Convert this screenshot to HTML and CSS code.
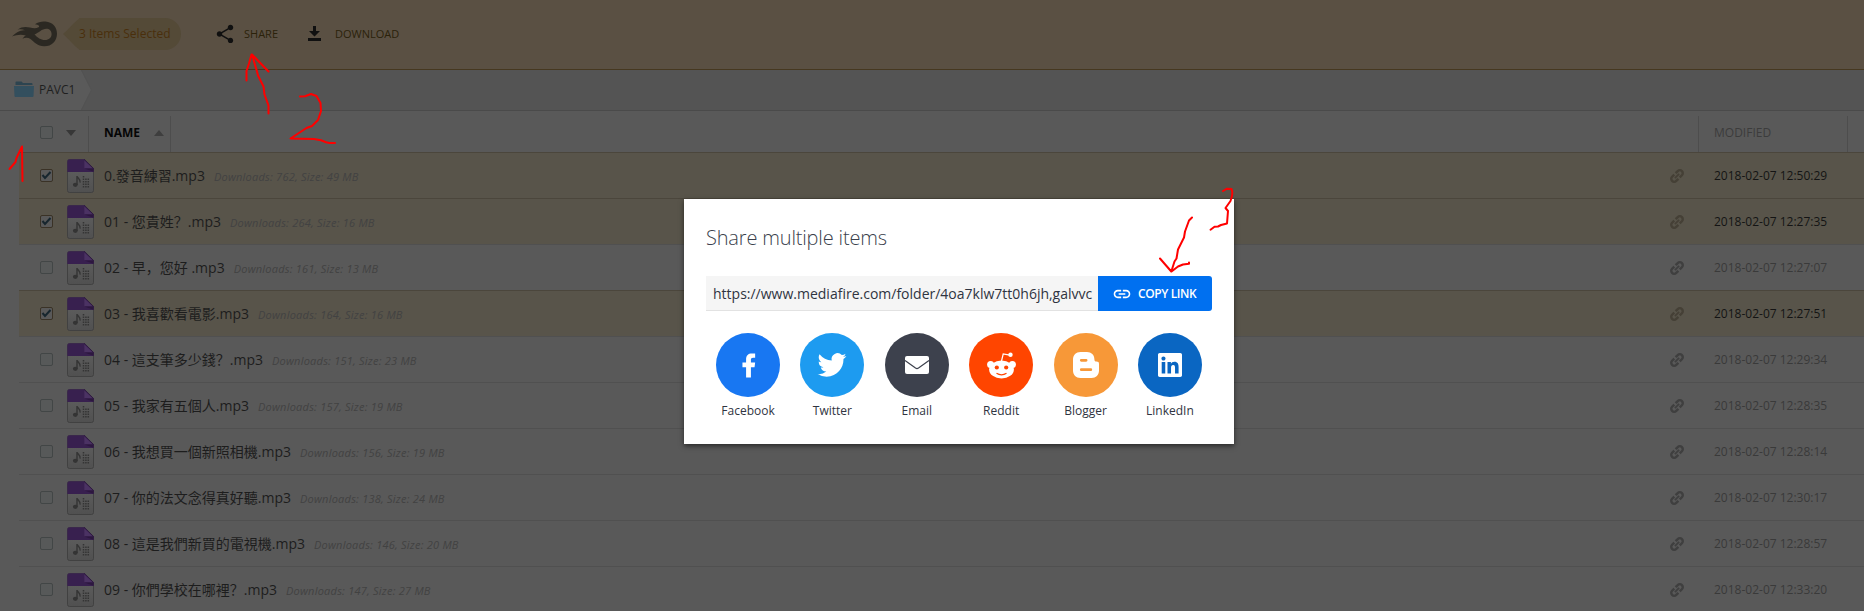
FILE: index.html
```html
<!DOCTYPE html>
<html lang="zh-Hans">
<head>
<meta charset="utf-8">
<title>PAVC1</title>
<link rel="stylesheet" href="styles.css">
</head>
<body>
<svg class="defs" width="0" height="0">
  <defs>
    <linearGradient id="paper" x1="0" y1="0" x2="0" y2="1"><stop offset="0" stop-color="#616161"/><stop offset="1" stop-color="#505050"/></linearGradient>
    <symbol id="mp3" viewBox="0 0 27 34">
      <path d="M2.5 .5h15l9 9v22a2 2 0 0 1-2 2h-22a2 2 0 0 1-2-2v-29a2 2 0 0 1 2-2z" fill="url(#paper)" stroke="#414141"/>
      <path d="M.3 13V2.5A2.2 2.2 0 0 1 2.5.3h15.2l9 9V13z" fill="#38204f"/>
      <path d="M17.4.6v8.6h8.9z" fill="#4b3263"/>
      <path d="M17.4 9.4h9.2v3.4z" fill="#2d173f"/>
      <path d="M17 .4l9.6 9.3" stroke="#2c1a3c" fill="none"/>
      <ellipse cx="8.3" cy="25.8" rx="2.4" ry="2.1" fill="#343434"/>
      <path d="M10 26v-9c.4 2.300 3.900 3 3.100 6.600" stroke="#343434" stroke-width="1.400" fill="none"/>
      <g stroke="#343434" stroke-width="1.500" stroke-dasharray="1.600 .9"><path d="M16.500 17v12M18.900 19.500v9.500M21.300 19.500v9.500"/></g>
    </symbol>
    <symbol id="chain" viewBox="0 0 24 24">
      <g transform="rotate(-45 12 12)" fill="none" stroke="currentColor" stroke-width="3.600"><path d="M10.500 16.400H6a4.400 4.400 0 0 1 0-8.800h4.500M13.500 7.600H18a4.400 4.400 0 0 1 0 8.800h-4.500"/><path d="M7.500 12h9" stroke-width="2.600"/></g>
    </symbol>
  </defs>
</svg>

<header class="topbar">
  <svg class="logo" viewBox="0 0 46 26"><path fill-rule="evenodd" d="M0 15.500C4 11 9 8.500 13 9.300 10.500 8 8 8 5.500 8.700 9.500 5.500 14 5.800 18 6.500c3 .8 6 1.300 8.500-.2 1.600-1 .3-2.600-3.500-3.100 3-2.400 7-3 10.500-2.700C40.500 1 45 6 45 12.700 45 20 39.500 25.500 32 25.300c-6.500-.2-9.500-4-13.500-7.300-2.300-1.700-5.500-1.800-8-.2 1-1.800 2-2.500 3.500-3.300C9 13 4.500 13.800 0 15.500zM22.500 13.500c3 3 6 5.500 10.500 5.500 4 0 6.600-2.500 6.600-6 0-3.300-2.200-5.300-5.200-5.300-4.600 0-7.400 3.900-11.900 5.800z"/></svg>
  <div class="selected"><svg viewBox="0 0 17 32"><path d="M17 0v32C11 28 5 20 0 16 5 12 11 4 17 0z"/></svg><span>3 Items Selected</span></div>
  <div class="action share"><svg viewBox="0 0 24 24"><path d="M18 16.080c-.76 0-1.440.3-1.960.77L8.910 12.700c.05-.23.09-.46.09-.7s-.04-.47-.09-.7l7.050-4.110c.54.5 1.250.81 2.040.81 1.660 0 3-1.340 3-3s-1.340-3-3-3-3 1.340-3 3c0 .24.04.47.09.7L8.040 9.810C7.500 9.310 6.790 9 6 9c-1.660 0-3 1.340-3 3s1.340 3 3 3c.79 0 1.500-.31 2.040-.81l7.120 4.160c-.05.21-.08.43-.08.65 0 1.610 1.310 2.920 2.920 2.920s2.920-1.310 2.920-2.920-1.310-2.920-2.920-2.920z"/></svg><span>SHARE</span></div>
  <div class="action download"><svg viewBox="0 0 13 15"><path d="M5 0h3v5h4L6.500 10.500 1 5h4zM0 12h13v3H0z"/></svg><span>DOWNLOAD</span></div>
</header>

<nav class="crumbs">
  <div class="crumb"><svg viewBox="0 0 20 16"><path d="M1.500 4V1.500a1 1 0 0 1 1-1h5l1.500 1.500h8.500a1 1 0 0 1 1 1V4z" fill="#2d4450"/><path d="M0 5h20l-.5 10a1 1 0 0 1-1 1h-17a1 1 0 0 1-1-1z" fill="#334f5e"/></svg><span>PAVC1</span></div>
  <svg class="crumb-tip" viewBox="0 0 11 40"><path d="M0 0l10.500 20L0 40z" fill="#5a5a5a"/><path d="M.3 0l10 20-10 20" fill="none" stroke="#505050" stroke-width=".6"/></svg>
</nav>

<main class="files">
  <div class="thead">
    <i class="box"></i><i class="tri down"></i>
    <div class="th-name">NAME<i class="tri up"></i></div>
    <div class="th-mod">MODIFIED</div>
  </div>
  <div id="rows"></div>
</main>

<section class="modal">
  <h1>Share multiple items</h1>
  <div class="linkbar">
    <div class="url">https://www.mediafire.com/folder/4oa7klw7tt0h6jh,galvvc</div>
    <div class="copy"><svg viewBox="0 0 24 24"><path d="M3.900 12c0-1.710 1.390-3.100 3.100-3.100h4V7H7c-2.760 0-5 2.240-5 5s2.240 5 5 5h4v-1.900H7c-1.710 0-3.100-1.390-3.100-3.100zM8 13h8v-2H8v2zm9-6h-4v1.900h4c1.710 0 3.100 1.390 3.100 3.100s-1.390 3.100-3.100 3.100h-4V17h4c2.760 0 5-2.240 5-5s-2.240-5-5-5z"/></svg><span>COPY LINK</span></div>
  </div>
  <div class="socials">
    <div class="soc"><div class="disc fb"><svg width="29" height="29" viewBox="0 0 24 24"><path d="M14 13.500h3l.5-4H14v-2c0-1.030 0-2 2-2h1.500V2.140C17.170 2.100 15.940 2 14.640 2 11.930 2 10 3.660 10 6.700v2.800H7v4h3V22h4v-8.500z"/></svg></div>Facebook</div>
    <div class="soc"><div class="disc tw"><svg width="34" height="34" viewBox="0 0 24 24"><path d="M22.162 5.656a8.384 8.384 0 0 1-2.402.658A4.196 4.196 0 0 0 21.600 4c-.82.488-1.719.83-2.656 1.015a4.182 4.182 0 0 0-7.126 3.814 11.874 11.874 0 0 1-8.620-4.370 4.168 4.168 0 0 0-.566 2.103c0 1.450.738 2.731 1.860 3.481a4.168 4.168 0 0 1-1.894-.523v.052a4.185 4.185 0 0 0 3.355 4.101 4.210 4.210 0 0 1-1.890.072A4.185 4.185 0 0 0 7.970 16.650a8.394 8.394 0 0 1-6.191 1.732 11.830 11.830 0 0 0 6.410 1.880c7.693 0 11.900-6.373 11.900-11.900 0-.18-.005-.362-.013-.54a8.496 8.496 0 0 0 2.087-2.165z"/></svg></div>Twitter</div>
    <div class="soc"><div class="disc em"><svg width="24" height="18" viewBox="0 0 24 18"><rect width="24" height="18" rx="2"/><path d="M0 4.500l10.500 7.600q1.500 1 3 0L24 4.500" fill="none" stroke="#3d414d" stroke-width="1.200"/></svg></div>Email</div>
    <div class="soc"><div class="disc rd"><svg width="29" height="27" viewBox="0 0 29 27"><circle cx="3.600" cy="12.500" r="3.500"/><circle cx="25.400" cy="12.500" r="3.500"/><ellipse cx="14.500" cy="17.500" rx="12.400" ry="9"/><circle cx="23.500" cy="2.800" r="2.200"/><path d="M14.500 9l1.700-7 6.600 1.200" fill="none" stroke="#fff" stroke-width="1.200"/><g fill="#ff4500"><circle cx="9.800" cy="15.500" r="2.100"/><circle cx="19.200" cy="15.500" r="2.100"/></g><path d="M9.500 21.300q5 3 10 0" fill="none" stroke="#ff4500" stroke-width="1.300"/></svg></div>Reddit</div>
    <div class="soc"><div class="disc bl"><svg width="26" height="26" viewBox="0 0 26 26"><path d="M7.500 0h6.500c4.300 0 7.400 3 7.400 7.200 0 1.600.6 2.400 2 2.400 1.800 0 2.600.7 2.600 2.400v6.500c0 4.500-3 7.500-7.500 7.500h-11C3 26 0 23 0 18.500v-11C0 3 3 0 7.500 0z"/><path d="M8.300 8.300h4.800M8.300 17.700h9.500" stroke="#f79838" stroke-width="2.800" stroke-linecap="round"/></svg></div>Blogger</div>
    <div class="soc"><div class="disc li"><svg width="24" height="24" viewBox="0 32 448 448"><path d="M416 32H31.900C14.300 32 0 46.500 0 64.300v383.400C0 465.500 14.300 480 31.900 480H416c17.600 0 32-14.500 32-32.300V64.300c0-17.800-14.400-32.300-32-32.300zM135.400 416H69V202.200h66.500V416zm-33.200-243c-21.300 0-38.500-17.300-38.500-38.500S80.900 96 102.200 96c21.200 0 38.500 17.300 38.500 38.500 0 21.300-17.200 38.500-38.500 38.500zm282.100 243h-66.400V312c0-24.800-.5-56.700-34.500-56.700-34.600 0-39.900 27-39.900 54.900V416h-66.400V202.200h63.700v29.200h.9c8.900-16.800 30.600-34.500 62.900-34.500 67.200 0 79.700 44.300 79.700 101.900V416z"/></svg></div>LinkedIn</div>
  </div>
</section>

<svg class="ink" viewBox="0 0 1864 611">
  <path d="M9.500 169l6-7 1-4 5.500-11.500.5 34.500"/>
  <path d="M268.500 113.500v-8l-4-11-1-8-5.500-11-1-4-5-17 16.500 17M251.500 54.500l-2.500 9-2.500 7.500v9.500"/>
  <path d="M300 96.500l5-.3 6-2.200 5.500 2 4 7 .5 8-3 9-6 6-5.500 2-16 10.500 23.500.6 7 1.200 5 2 3.500.7h5.500"/>
  <path d="M1192 217.500l-3 3-4 11-1 6-6 12-1.500 9-2 3-3.200 10-11.300-13M1171.500 271.500l6.500-5 5-2 6-.7v-1.300"/>
  <path d="M1223 191l4-2.300 4.500.3c1.500 3 .5 8-1 12l-5 7 2.500 3-1 12.500-6 1.500-3 1.500-3.500.2-4 3"/>
</svg>
<script src="rows.js"></script>
</body>
</html>
```
FILE: styles.css
```css
* { box-sizing: border-box; }
body { margin: 0; width: 1864px; height: 611px; overflow: hidden; background: #595959; font-family: "Open Sans", "Noto Sans CJK SC", sans-serif; color: #1f1f1f; }
.defs { display: block; position: absolute; }
svg { display: block; flex: none; }

.topbar { height: 70px; background: #5a5043; border-bottom: 1px solid #463820; display: flex; align-items: center; padding: 0 0 2px 12px; }
.logo { width: 46px; height: 26px; fill: #2b2822; }
.selected { display: flex; height: 32px; margin-left: 5px; font-size: 12px; line-height: 31px; color: #4a2f0c; }
.selected svg { width: 17px; height: 32px; fill: #544a37; }
.selected span { width: 102px; background: #544a37; border-radius: 0 16px 16px 0; white-space: nowrap; margin-left: -1px; }
.action { display: flex; align-items: center; font-size: 11px; color: #2b220a; }
.action svg { fill: #101010; }
.share { margin-left: 33px; }
.share svg { width: 22px; height: 22px; margin-right: 8px; }
.download { margin-left: 30px; }
.download svg { width: 13px; height: 15px; margin-right: 14px; }

.crumbs { height: 41px; background: #545454; border-bottom: 1px solid #4a4a4a; display: flex; }
.crumb { width: 81px; background: #5a5a5a; display: flex; align-items: center; padding: 0 0 2px 14px; gap: 5px; font-size: 12px; }
.crumb svg { width: 20px; height: 16px; }
.crumb-tip { width: 11px; height: 40px; }

.files { margin-left: 19px; }
.thead { height: 41px; display: flex; align-items: center; padding: 2px 0 0 21px; }
.box { width: 13px; height: 13px; border: 1px solid #424646; border-radius: 2px; background: #575959; display: block; flex: none; }
.tri { display: block; width: 0; border: 5px solid transparent; }
.down { border-top: 6px solid #373737; border-bottom: 0; margin: 0 12px 0 13px; }
.up { border-bottom: 6px solid #3e3e3e; border-top: 0; }
.th-name { display: flex; align-items: center; gap: 14px; width: 83px; height: 36px; align-self: flex-end; border: solid #4d4d4d; border-width: 0 1px; padding: 0 0 3px 15px; font-size: 12px; font-weight: 700; color: #050505; }
.th-mod { margin-left: auto; width: 150px; height: 36px; align-self: flex-end; border: solid #4d4d4d; border-width: 0 1px; padding: 8px 0 0 15px; margin-right: 16px; font-size: 12px; color: #3c3c3c; }

.row { height: 46px; border-top: 1px solid #505050; display: flex; align-items: center; padding-left: 21px; }
.row.on { background: #58544a; border-color: #4b463c; }
.row.on + .row:not(.on) { border-color: #505050; }
.row .box { display: grid; place-items: center; color: #17262e; }
.row.on .box { border-color: #3a3226; background: #595959; }
.mp3 { width: 27px; height: 34px; margin: 1px 10px 0 14px; }
.name { font-size: 14px; white-space: pre; color: #1d1d1d; margin-top: -1px; }
.meta { font-size: 11px; letter-spacing: .23px; font-style: italic; color: #424242; margin: 1px 0 0 9px; white-space: nowrap; }
.chain { width: 16px; height: 16px; color: #3f3f3f; margin-left: auto; }
.date { font-size: 12px; color: #3a3a3a; width: 150px; margin-left: 29px; white-space: nowrap; }
.on .chain { color: #454036; }
.on .date { color: #141414; }

.modal { position: absolute; left: 684px; top: 199px; width: 550px; height: 245px; background: #fff; box-shadow: 0 2px 5px rgba(0,0,0,.55); padding: 22px; color: #2f3441; }
h1 { margin: 0; font-size: 20px; line-height: 34px; font-weight: 300; letter-spacing: -.17px; color: #3a3f4c; height: 55px; }
.linkbar { display: flex; height: 35px; }
.url { width: 392px; background: #f5f5f5; border-bottom: 1px solid #e2e2e2; font-size: 14px; line-height: 35px; padding-left: 7px; white-space: nowrap; overflow: hidden; }
.copy { width: 114px; background: #0070f0; border-radius: 0 3px 3px 0; color: #fff; display: flex; align-items: center; padding-left: 14px; gap: 6px; font-size: 12px; font-weight: 600; letter-spacing: -.4px; white-space: nowrap; }
.copy svg { width: 20px; height: 20px; fill: #fff; }
.socials { display: flex; margin: 22px 0 0; justify-content: space-between; }
.soc { width: 84px; display: flex; flex-direction: column; align-items: center; font-size: 12px; line-height: 28px; }
.disc { width: 64px; height: 64px; border-radius: 50%; display: grid; place-items: center; }
.disc svg { fill: #fff; }
.fb { background: #1877f2; }
.tw { background: #1d9bf0; }
.em { background: #3d414d; }
.rd { background: #ff4500; }
.bl { background: #f79838; }
.li { background: #0a66c2; }
.ink { position: absolute; left: 0; top: 0; width: 1864px; height: 611px; pointer-events: none; fill: none; stroke: #f00; stroke-width: 2; stroke-linecap: round; stroke-linejoin: round; }
```
FILE: rows.js
```js
const files = [
  ['0.發音練習.mp3', 762, 49, '12:50:29', 1],
  ['01 - 您貴姓？.mp3', 264, 16, '12:27:35', 1],
  ['02 - 早，您好 .mp3', 161, 13, '12:27:07', 0],
  ['03 - 我喜歡看電影.mp3', 164, 16, '12:27:51', 1],
  ['04 - 這支筆多少錢？.mp3', 151, 23, '12:29:34', 0],
  ['05 - 我家有五個人.mp3', 157, 19, '12:28:35', 0],
  ['06 - 我想買一個新照相機.mp3', 156, 19, '12:28:14', 0],
  ['07 - 你的法文念得真好聽.mp3', 138, 24, '12:30:17', 0],
  ['08 - 這是我們新買的電視機.mp3', 146, 20, '12:28:57', 0],
  ['09 - 你們學校在哪裡？.mp3', 147, 27, '12:33:20', 0]
];
const check = '<svg width="11" height="11" viewBox="0 0 11 11"><path d="M1.500 5l2.500 3 5.500-6" fill="none" stroke="currentColor" stroke-width="2"/></svg>';
document.getElementById('rows').innerHTML = files.map(([name, n, mb, time, on]) => `
  <div class="row${on ? ' on' : ''}">
    <i class="box">${on ? check : ''}</i>
    <svg class="mp3"><use href="#mp3"/></svg>
    <span class="name">${name}</span>
    <span class="meta">Downloads: ${n}, Size: ${mb} MB</span>
    <svg class="chain"><use href="#chain"/></svg>
    <span class="date">2018-02-07 ${time}</span>
  </div>`).join('');
```
